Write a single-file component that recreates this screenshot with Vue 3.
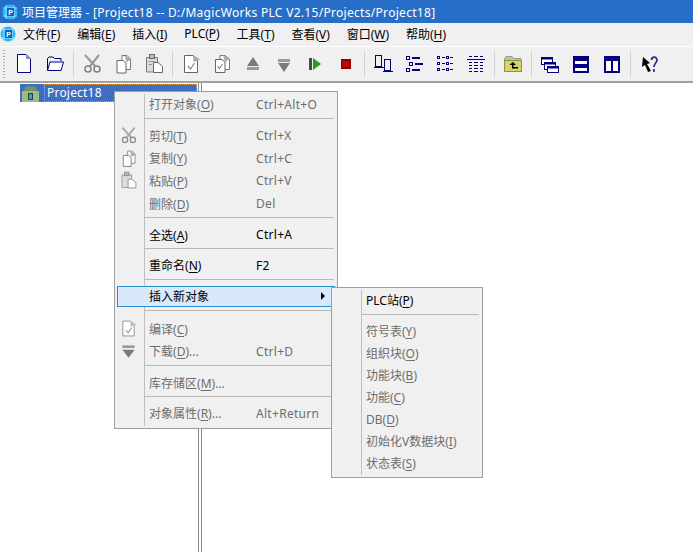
<template>
	<div class="app">

		<div class="titlebar">
			<svg class="logo" width="16" height="16" viewBox="0 0 16 16">
				<circle cx="8" cy="8" r="7.500" fill="#2ab8f6" />
				<path d="M4 1V15M12 1V15M1 4H15M1 12H15" stroke="#8fe0ff" stroke-width="1" />
				<rect x="5" y="4" width="7" height="8" fill="#1460c0" />
				<text x="8.500" y="10.500" text-anchor="middle" class="logo-p">P</text>
			</svg>
			<span>项目管理器<span class="title-rest"> - [Project18 -- D:/MagicWorks PLC V2.15/Projects/Project18]</span></span>
		</div>

		<div class="menubar">
			<svg class="logo" width="16" height="16" viewBox="0 0 16 16">
				<circle cx="8" cy="8" r="7.500" fill="#2ab8f6" />
				<path d="M4 1V15M12 1V15M1 4H15M1 12H15" stroke="#8fe0ff" stroke-width="1" />
				<rect x="5" y="4" width="7" height="8" fill="#1460c0" />
				<text x="8.500" y="10.500" text-anchor="middle" class="logo-p">P</text>
			</svg>
			<div class="menu-items">
				<span v-for="m in menus" :key="m.key">{{ m.label }}(<u>{{ m.key }}</u>)</span>
			</div>
		</div>

		<div class="toolbar">
			<div class="grip"></div>

			<button class="tool">
				<svg width="24" height="24" viewBox="0 0 24 24">
					<path d="M5.500 2.500H14L18.500 7V20.500H5.500Z" fill="#fff" stroke="#000080" />
					<path d="M14 2.500L18.500 7H14Z" fill="#8f8fb8" />
				</svg>
			</button>
			<button class="tool">
				<svg width="24" height="24" viewBox="0 0 24 24">
					<path d="M4.500 18.500V6.500L6 5H10L11.500 6.500H18V9" fill="none" stroke="#000080" />
					<path d="M4.500 18.500L7 10H20.500L18 18.500Z" fill="#fff" stroke="#000080" />
				</svg>
			</button>

			<div class="tool-sep"></div>

			<button class="tool">
				<svg width="24" height="24" viewBox="0 0 24 24">
					<path d="M5 3L15 14M19 3L10 14" stroke="#9a9a9a" stroke-width="2.200" fill="none" />
					<circle cx="8" cy="17" r="3" fill="none" stroke="#808080" stroke-width="1.500" />
					<circle cx="17" cy="17" r="3" fill="none" stroke="#808080" stroke-width="1.500" />
				</svg>
			</button>
			<button class="tool">
				<svg width="24" height="24" viewBox="0 0 24 24">
					<path d="M11 3.500H16L19.500 7V17.500H11Z" fill="#fff" stroke="#777" />
					<path d="M6 8.500H12L15 11V21H6Z" fill="#fff" stroke="#666" />
					<path d="M14 3L20 8L15 10Z" fill="#a8a8a8" />
				</svg>
			</button>
			<button class="tool">
				<svg width="24" height="24" viewBox="0 0 24 24">
					<path d="M4.500 5.500H15.500V20H4.500Z" fill="#ddd" stroke="#777" />
					<rect x="7.500" y="2.500" width="5" height="4" fill="#bbb" stroke="#666" />
					<path d="M6.500 9.500H13M6.500 12.500H10" stroke="#999" />
					<path d="M11.500 10.500H16L20.500 14.500V20.500H11.500Z" fill="#fff" stroke="#666" />
				</svg>
			</button>

			<div class="tool-sep"></div>

			<button class="tool">
				<svg width="24" height="24" viewBox="0 0 24 24">
					<path d="M5.500 3.500H14L18.500 8V20.500H5.500Z" fill="#fff" stroke="#666" />
					<path d="M14 3L21 7.500L14.500 10Z" fill="#aaa" />
					<path d="M9 14L11.500 17L15.500 11" fill="none" stroke="#888" stroke-width="1.200" />
				</svg>
			</button>
			<button class="tool">
				<svg width="24" height="24" viewBox="0 0 24 24">
					<path d="M10 3.500H15L19.500 7V17.500H10Z" fill="#fff" stroke="#777" />
					<path d="M5.500 7.500H12L15 10V20.500H5.500Z" fill="#fff" stroke="#666" />
					<path d="M13 3L20 7L15 10Z" fill="#aaa" />
					<path d="M7.500 14L9.500 16.500L12.500 12" fill="none" stroke="#888" stroke-width="1.200" />
				</svg>
			</button>
			<button class="tool">
				<svg width="24" height="24" viewBox="0 0 24 24">
					<path d="M12 5L18 14H6Z" fill="#7a7a7a" />
					<rect x="6" y="15" width="12" height="3" fill="#9a9a9a" />
				</svg>
			</button>
			<button class="tool">
				<svg width="24" height="24" viewBox="0 0 24 24">
					<rect x="6" y="7" width="12" height="3" fill="#9a9a9a" />
					<path d="M12 20L18 11H6Z" fill="#7a7a7a" />
				</svg>
			</button>
			<button class="tool">
				<svg width="24" height="24" viewBox="0 0 24 24">
					<rect x="6" y="6" width="3" height="12" fill="#4a4a4a" />
					<path d="M10 6L18 12L10 18Z" fill="#22a022" />
				</svg>
			</button>
			<button class="tool">
				<svg width="24" height="24" viewBox="0 0 24 24">
					<rect x="7" y="7" width="10" height="10" fill="#9a0000" />
					<rect x="9" y="9" width="6" height="6" fill="#b80808" />
				</svg>
			</button>

			<div class="tool-sep"></div>

			<button class="tool">
				<svg width="24" height="24" viewBox="0 0 24 24">
					<rect x="4.500" y="3.500" width="6" height="11" fill="none" stroke="#000080" />
					<rect x="13.500" y="7.500" width="6" height="11" fill="none" stroke="#000080" />
					<path d="M3 15.500H13M12 19.500H22" stroke="#000080" />
				</svg>
			</button>
			<button class="tool">
				<svg width="24" height="24" viewBox="0 0 24 24">
					<rect x="4.500" y="4.500" width="3" height="3" fill="none" stroke="#000080" />
					<rect x="7.500" y="10.500" width="3" height="3" fill="none" stroke="#000080" />
					<rect x="4.500" y="16.500" width="3" height="3" fill="none" stroke="#000080" />
					<path d="M10 6H18M13 12H21M10 18H18" stroke="#000080" stroke-width="2" />
				</svg>
			</button>
			<button class="tool">
				<svg width="24" height="24" viewBox="0 0 24 24">
					<rect x="4.500" y="4.500" width="2" height="2" fill="none" stroke="#000080" />
					<rect x="4.500" y="10.500" width="2" height="2" fill="none" stroke="#000080" />
					<rect x="4.500" y="16.500" width="2" height="2" fill="none" stroke="#000080" />
					<rect x="13.500" y="4.500" width="2" height="2" fill="none" stroke="#000080" />
					<rect x="13.500" y="10.500" width="2" height="2" fill="none" stroke="#000080" />
					<rect x="13.500" y="16.500" width="2" height="2" fill="none" stroke="#000080" />
					<path d="M9 5.500H12M9 11.500H12M9 17.500H12M17 5.500H20M17 11.500H20M17 17.500H20" stroke="#000080" />
				</svg>
			</button>
			<button class="tool">
				<svg width="24" height="24" viewBox="0 0 24 24">
					<path d="M3 7.500H21" stroke="#000080" />
					<path d="M5 4.500H8M10 4.500H14M16 4.500H19M5 10.500H8M10 10.500H14M16 10.500H19M5 13.500H8M10 13.500H14M16 13.500H19M5 16.500H8M10 16.500H14M16 16.500H19M5 19.500H8M10 19.500H14M16 19.500H19" stroke="#000080" />
				</svg>
			</button>

			<div class="tool-sep"></div>

			<button class="tool">
				<svg width="24" height="24" viewBox="0 0 24 24">
					<path d="M3.500 7L5 4.500H11L12.500 6.500H20V8.500H3.500Z" fill="#c4c490" stroke="#999" />
					<rect x="3.500" y="8.500" width="17" height="11" fill="#d4d468" stroke="#8f8f50" />
					<path d="M12 10L8.500 13H11V16.500H17V15H12.500V13H15Z" fill="#000" />
				</svg>
			</button>

			<div class="tool-sep"></div>

			<button class="tool">
				<svg width="24" height="24" viewBox="0 0 24 24">
					<rect x="3.500" y="5.500" width="11" height="7" fill="#fff" stroke="#000080" />
					<rect x="3.500" y="5.500" width="11" height="2" fill="#000080" />
					<rect x="6.500" y="10.500" width="11" height="7" fill="#fff" stroke="#000080" />
					<rect x="6.500" y="10.500" width="11" height="2" fill="#000080" />
					<rect x="9.500" y="14.500" width="11" height="6" fill="#fff" stroke="#000080" />
					<rect x="9.500" y="14.500" width="11" height="2" fill="#000080" />
				</svg>
			</button>
			<button class="tool">
				<svg width="24" height="24" viewBox="0 0 24 24">
					<rect x="4" y="4" width="16" height="17" fill="#000080" />
					<rect x="6" y="9" width="12" height="3" fill="#fff" />
					<rect x="6" y="16" width="12" height="3" fill="#fff" />
				</svg>
			</button>
			<button class="tool">
				<svg width="24" height="24" viewBox="0 0 24 24">
					<rect x="4" y="4" width="16" height="17" fill="#000080" />
					<rect x="6" y="9" width="5" height="10" fill="#fff" />
					<rect x="13" y="9" width="5" height="10" fill="#fff" />
				</svg>
			</button>

			<div class="tool-sep"></div>

			<button class="tool">
				<svg width="24" height="24" viewBox="0 0 24 24">
					<path d="M6 5L13 11L10 12L14 19L11 20L8 13L5 15Z" fill="#000" />
					<path d="M14.500 8C14.500 4.500 20 4 20 8C20 11 17 11 17 15M17 17V20" fill="none" stroke="#2a2a90" stroke-width="1.700" />
				</svg>
			</button>
		</div>

		<div class="workspace">

			<div class="tree">
				<div class="tree-row">
					<svg class="tree-icon" width="17" height="17" viewBox="0 0 17 17">
						<path d="M2 6L3 2C5 1 12 1 14 2L15 6Z" fill="#6f9468" />
						<rect x="0" y="6" width="17" height="11" fill="#9cbc84" />
						<rect x="6" y="8" width="5" height="7" fill="#1f3f5f" />
						<rect x="7" y="9" width="3" height="5" fill="#4f9f8f" />
					</svg>
					<span class="tree-label">Project18</span>
				</div>
			</div>

			<div class="splitter"></div>

			<div class="view"></div>

			<div class="ctx-menu">
				<template v-for="(item, i) in mainMenu" :key="i">
					<div v-if="item.sep" class="menu-sep" :style="{ height: item.sep + 'px' }"></div>
					<div v-else class="menu-row" :class="{ disabled: item.disabled, active: item.active }">
						<span class="menu-icon">
							<svg v-if="item.icon == 'cut'" width="21" height="21" viewBox="0 0 24 24">
								<path d="M5 3L15 14M19 3L10 14" stroke="#a8a8a8" stroke-width="2.200" fill="none" />
								<circle cx="8" cy="17" r="3" fill="none" stroke="#909090" stroke-width="1.500" />
								<circle cx="17" cy="17" r="3" fill="none" stroke="#909090" stroke-width="1.500" />
							</svg>
							<svg v-if="item.icon == 'copy'" width="21" height="21" viewBox="0 0 24 24">
								<path d="M11 3.500H16L19.500 7V17.500H11Z" fill="#fff" stroke="#888" />
								<path d="M6 8.500H12L15 11V21H6Z" fill="#fff" stroke="#777" />
								<path d="M14 3L20 8L15 10Z" fill="#aaa" />
							</svg>
							<svg v-if="item.icon == 'paste'" width="21" height="21" viewBox="0 0 24 24">
								<path d="M4.500 5.500H15.500V20H4.500Z" fill="#ddd" stroke="#999" />
								<rect x="7.500" y="2.500" width="5" height="4" fill="#bbb" stroke="#888" />
								<path d="M11.500 10.500H16L20.500 14.500V20.500H11.500Z" fill="#fff" stroke="#888" />
							</svg>
							<svg v-if="item.icon == 'compile'" width="21" height="21" viewBox="0 0 24 24">
								<path d="M5.500 3.500H14L18.500 8V20.500H5.500Z" fill="#fff" stroke="#888" />
								<path d="M14 3L21 7.500L14.500 10Z" fill="#bbb" />
								<path d="M9 14L11.500 17L15.500 11" fill="none" stroke="#999" stroke-width="1.200" />
							</svg>
							<svg v-if="item.icon == 'download'" width="21" height="21" viewBox="0 0 24 24">
								<rect x="5" y="5" width="14" height="3" fill="#9a9a9a" />
								<path d="M12 19L19 10H5Z" fill="#7a7a7a" />
							</svg>
						</span>
						<span class="menu-label">{{ item.label }}<template v-if="item.key">(<u>{{ item.key }}</u>)</template>{{ item.dots }}</span>
						<span class="menu-short">{{ item.short }}</span>
						<span v-if="item.active" class="menu-arrow"></span>
					</div>
				</template>
			</div>

			<div class="ctx-menu sub-menu">
				<template v-for="(item, i) in subMenu" :key="i">
					<div v-if="item.sep" class="menu-sep" :style="{ height: item.sep + 'px' }"></div>
					<div v-else class="menu-row" :class="{ disabled: item.disabled }">
						<span class="menu-label">{{ item.label }}(<u>{{ item.key }}</u>)</span>
					</div>
				</template>
			</div>

		</div>

	</div>
</template>

<script setup>
const menus = [
	{ label: '文件', key: 'F' },
	{ label: '编辑', key: 'E' },
	{ label: '插入', key: 'I' },
	{ label: 'PLC', key: 'P' },
	{ label: '工具', key: 'T' },
	{ label: '查看', key: 'V' },
	{ label: '窗口', key: 'W' },
	{ label: '帮助', key: 'H' }
]

const mainMenu = [
	{ label: '打开对象', key: 'O', short: 'Ctrl+Alt+O', disabled: true },
	{ sep: 8.6 },
	{ label: '剪切', key: 'T', short: 'Ctrl+X', disabled: true, icon: 'cut' },
	{ label: '复制', key: 'Y', short: 'Ctrl+C', disabled: true, icon: 'copy' },
	{ label: '粘贴', key: 'P', short: 'Ctrl+V', disabled: true, icon: 'paste' },
	{ label: '删除', key: 'D', short: 'Del', disabled: true },
	{ sep: 8.4 },
	{ label: '全选', key: 'A', short: 'Ctrl+A' },
	{ sep: 8 },
	{ label: '重命名', key: 'N', short: 'F2' },
	{ sep: 8.4 },
	{ label: '插入新对象', active: true },
	{ sep: 9.7 },
	{ label: '编译', key: 'C', disabled: true, icon: 'compile' },
	{ label: '下载', key: 'D', dots: '...', short: 'Ctrl+D', disabled: true, icon: 'download' },
	{ sep: 9 },
	{ label: '库存储区', key: 'M', dots: '...', disabled: true },
	{ sep: 7.7 },
	{ label: '对象属性', key: 'R', dots: '...', short: 'Alt+Return', disabled: true }
]

const subMenu = [
	{ label: 'PLC站', key: 'P' },
	{ sep: 9 },
	{ label: '符号表', key: 'Y', disabled: true },
	{ label: '组织块', key: 'O', disabled: true },
	{ label: '功能块', key: 'B', disabled: true },
	{ label: '功能', key: 'C', disabled: true },
	{ label: 'DB', key: 'D', disabled: true },
	{ label: '初始化V数据块', key: 'I', disabled: true },
	{ label: '状态表', key: 'S', disabled: true }
]
</script>

<style>
html, body {
	margin: 0;
	background: #fff;
}
</style>

<style scoped>
.app {
	width: 693px;
	height: 552px;
	display: flex;
	flex-direction: column;
	overflow: hidden;
	font-family: "Noto Sans", "Noto Sans CJK SC", sans-serif;
	font-size: 12px;
	color: #000;
}

u {
	text-underline-offset: 2px;
}

.titlebar {
	height: 23px;
	background: #266ec8;
	color: #fff;
	display: flex;
	align-items: center;
	gap: 4px;
	padding-left: 2px;
}

.title-rest {
	letter-spacing: 0.3px;
}

.logo {
	flex: none;
}

.logo-p {
	font-family: "Liberation Sans", sans-serif;
	font-size: 7px;
	font-weight: 700;
	fill: #fff;
}

.menubar {
	height: 23px;
	box-sizing: border-box;
	padding-bottom: 2px;
	background: #f0f0f0;
	display: flex;
	align-items: center;
}

.menubar .logo {
	margin-right: 7px;
}

.menu-items {
	display: flex;
	gap: 16.9px;
}

.toolbar {
	height: 34px;
	background: #f0f0f0;
	border-top: 1px solid #fff;
	border-bottom: 2px solid #a0a0a0;
	display: flex;
	align-items: center;
	padding-left: 8.5px;
	position: relative;
}

.grip {
	position: absolute;
	left: 3px;
	top: 3px;
	bottom: 3px;
	width: 2px;
	background: repeating-linear-gradient(#a8a8a8 0 1px, transparent 1px 3px);
}

.tool {
	width: 31px;
	height: 24px;
	padding: 0;
	border: 0;
	background: transparent;
	display: flex;
	align-items: center;
	justify-content: center;
}

.tool-sep {
	width: 1px;
	height: 26px;
	margin: 0 2.5px;
	background: #d0d0d0;
}

.workspace {
	flex: 1;
	display: flex;
	position: relative;
	background: #fff;
}

.tree {
	width: 198px;
	padding: 1px 1px 0 20px;
	box-sizing: border-box;
}

.tree-row {
	height: 18px;
	background: #3d6ec0;
	color: #fff;
	display: flex;
	align-items: center;
	padding-left: 2px;
}

.tree-icon {
	flex: none;
}

.tree-label {
	flex: 1;
	align-self: stretch;
	margin-left: 5px;
	padding-left: 2px;
	border: 1px dotted #e8a040;
	line-height: 16px;
	letter-spacing: 0.2px;
}

.splitter {
	width: 2px;
	border-left: 1px solid #888;
	border-right: 1px solid #888;
}

.view {
	flex: 1;
}

.ctx-menu {
	position: absolute;
	left: 114px;
	top: 8px;
	width: 224px;
	height: 338px;
	box-sizing: border-box;
	background: #f0f0f0;
	border: 1px solid #a0a0a0;
	padding: 1px 2px 2px;
}

.ctx-menu::before {
	content: '';
	position: absolute;
	left: 29px;
	top: 2px;
	bottom: 2px;
	width: 1px;
	background: #c0c0c0;
}

.sub-menu {
	left: 331px;
	top: 204px;
	width: 152px;
	height: 191px;
}

.menu-row {
	height: 22.67px;
	display: flex;
	align-items: center;
	position: relative;
}

.sub-menu .menu-row {
	height: 22px;
}

.menu-row.disabled {
	color: #6d6d6d;
}

.menu-row.active::before {
	content: '';
	position: absolute;
	left: 0;
	right: 0;
	top: 1px;
	bottom: 1px;
	background: #d9e9fb;
	border: 1px solid #2a8fd0;
}

.menu-row.active > span {
	position: relative;
}

.menu-icon {
	width: 32px;
	flex: none;
	display: flex;
	justify-content: center;
	padding-right: 9px;
	box-sizing: border-box;
}

.menu-label {
	width: 107px;
	flex: none;
	white-space: nowrap;
}

.menu-short {
	letter-spacing: 0.3px;
}

.sub-menu .menu-label {
	padding-left: 32px;
	width: auto;
}

.menu-row.active > .menu-arrow {
	position: absolute;
	right: 10px;
	top: 7px;
	border-left: 4px solid #000;
	border-top: 4px solid transparent;
	border-bottom: 4px solid transparent;
}

.menu-sep {
	margin: 0 1px 0 28px;
	position: relative;
}

.menu-sep::after {
	content: '';
	position: absolute;
	left: 0;
	right: 0;
	top: 2px;
	height: 1px;
	background: #b8b8b8;
}

.sub-menu .menu-sep::after {
	top: 3px;
}
</style>
